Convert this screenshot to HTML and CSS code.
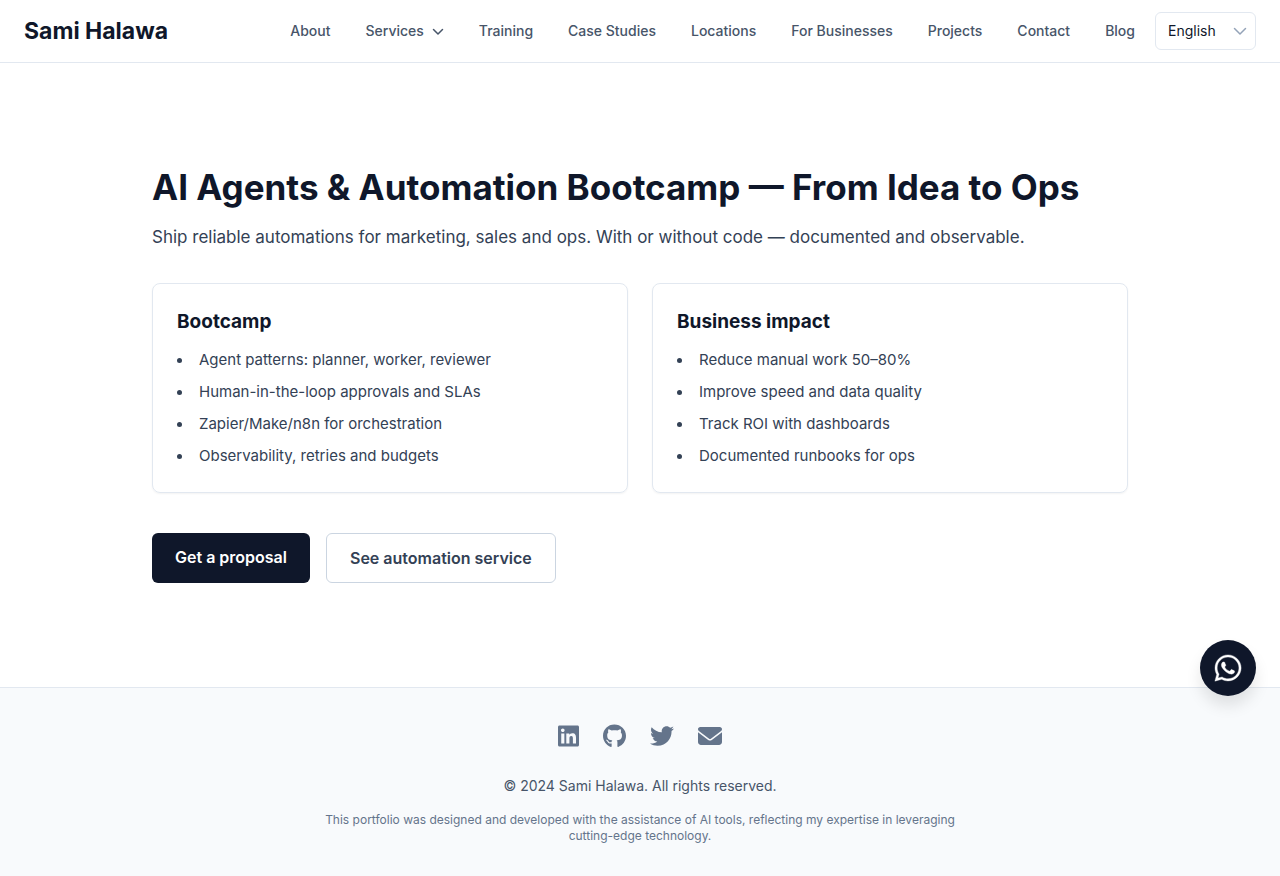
FILE: index.html
```html
<!DOCTYPE html>
<html lang="en">
<head>
<meta charset="utf-8">
<meta name="viewport" content="width=device-width, initial-scale=1">
<title>AI Agents &amp; Automation Bootcamp | Sami Halawa</title>
<link rel="stylesheet" href="styles.css">
</head>
<body>
<header class="header">
  <a class="brand" href="#">Sami Halawa</a>
  <nav class="nav" aria-label="Main">
    <a class="nav-link" href="#">About</a>
    <button class="nav-link" type="button">Services
      <svg class="nav-chevron" viewBox="0 0 12 12" aria-hidden="true"><path d="M1.500 4.500 6 9l4.500-4.500"/></svg>
    </button>
    <a class="nav-link" href="#">Training</a>
    <a class="nav-link" href="#">Case Studies</a>
    <a class="nav-link" href="#">Locations</a>
    <a class="nav-link" href="#">For Businesses</a>
    <a class="nav-link" href="#">Projects</a>
    <a class="nav-link" href="#">Contact</a>
    <a class="nav-link" href="#">Blog</a>
  </nav>
  <div class="language">
    <select class="language-select" aria-label="Language"><option>English</option></select>
    <svg class="language-chevron" viewBox="0 0 20 20" aria-hidden="true"><path d="M4.500 7.500 10 13l5.500-5.500"/></svg>
  </div>
</header>
<main class="main">
  <h1 class="title">AI Agents &amp; Automation Bootcamp — From Idea to Ops</h1>
  <p class="lead">Ship reliable automations for marketing, sales and ops. With or without code — documented and observable.</p>
  <div class="cards">
    <section class="card">
      <h2 class="card-title">Bootcamp</h2>
      <ul class="list">
        <li>Agent patterns: planner, worker, reviewer</li>
        <li>Human-in-the-loop approvals and SLAs</li>
        <li>Zapier/Make/n8n for orchestration</li>
        <li>Observability, retries and budgets</li>
      </ul>
    </section>
    <section class="card">
      <h2 class="card-title">Business impact</h2>
      <ul class="list">
        <li>Reduce manual work 50–80%</li>
        <li>Improve speed and data quality</li>
        <li>Track ROI with dashboards</li>
        <li>Documented runbooks for ops</li>
      </ul>
    </section>
  </div>
  <div class="actions">
    <a class="button button-primary" href="#">Get a proposal</a>
    <a class="button button-outline" href="#">See automation service</a>
  </div>
</main>
<footer class="footer">
  <div class="social">
    <a href="#" aria-label="LinkedIn"><svg class="icon-linkedin" viewBox="0 0 448 512"><path d="M416 32H31.900C14.300 32 0 46.500 0 64.300v383.400C0 465.500 14.300 480 31.900 480H416c17.600 0 32-14.500 32-32.300V64.300c0-17.800-14.400-32.300-32-32.300zM135.400 416H69V202.200h66.500V416zm-33.200-243c-21.300 0-38.500-17.300-38.500-38.500S80.900 96 102.200 96c21.200 0 38.500 17.300 38.500 38.500 0 21.300-17.200 38.500-38.500 38.500zm282.100 243h-66.400V312c0-24.800-.5-56.700-34.500-56.700-34.600 0-39.900 27-39.900 54.900V416h-66.400V202.200h63.700v29.200h.9c8.900-16.800 30.600-34.500 62.900-34.500 67.200 0 79.700 44.300 79.700 101.900V416z"/></svg></a>
    <a href="#" aria-label="GitHub"><svg class="icon-github" viewBox="0 0 496 512"><path d="M165.900 397.400c0 2-2.300 3.600-5.200 3.600-3.300.3-5.600-1.300-5.600-3.600 0-2 2.300-3.600 5.200-3.600 3-.3 5.600 1.300 5.600 3.600zm-31.100-4.500c-.7 2 1.300 4.300 4.300 4.900 2.600 1 5.600 0 6.200-2s-1.300-4.300-4.300-5.200c-2.600-.7-5.500.3-6.200 2.300zm44.200-1.700c-2.900.7-4.900 2.600-4.600 4.900.3 2 2.900 3.300 5.900 2.600 2.900-.7 4.900-2.600 4.600-4.600-.3-1.900-3-3.200-5.900-2.900zM244.800 8C106.100 8 0 113.300 0 252c0 110.900 69.800 205.800 169.500 239.200 12.800 2.300 17.300-5.600 17.300-12.100 0-6.200-.3-40.400-.3-61.400 0 0-70 15-84.700-29.800 0 0-11.400-29.100-27.800-36.600 0 0-22.900-15.700 1.600-15.400 0 0 24.900 2 38.600 25.800 21.900 38.600 58.600 27.500 72.900 20.900 2.300-16 8.800-27.100 16-33.700-55.900-6.200-112.300-14.300-112.300-110.500 0-27.500 7.600-41.300 23.600-58.900-2.600-6.500-11.100-33.300 2.600-67.900 20.900-6.500 69 27 69 27 20-5.600 41.500-8.500 62.800-8.500s42.800 2.900 62.800 8.500c0 0 48.100-33.600 69-27 13.700 34.700 5.200 61.400 2.600 67.900 16 17.700 25.800 31.500 25.800 58.900 0 96.500-58.900 104.200-114.800 110.500 9.200 7.900 17 22.900 17 46.400 0 33.700-.3 75.400-.3 83.600 0 6.500 4.600 14.400 17.300 12.100C428.200 457.800 496 362.900 496 252 496 113.300 383.500 8 244.800 8z"/></svg></a>
    <a href="#" aria-label="Twitter"><svg class="icon-wide" viewBox="0 0 512 512"><path d="M459.370 151.716c.325 4.548.325 9.097.325 13.645 0 138.720-105.583 298.558-298.558 298.558-59.452 0-114.680-17.219-161.137-47.106 8.447.974 16.568 1.299 25.340 1.299 49.055 0 94.213-16.568 130.274-44.832-46.132-.975-84.792-31.188-98.112-72.772 6.498.974 12.995 1.624 19.818 1.624 9.421 0 18.843-1.300 27.614-3.573-48.081-9.747-84.143-51.980-84.143-102.985v-1.299c13.969 7.797 30.214 12.670 47.431 13.319-28.264-18.843-46.781-51.005-46.781-87.391 0-19.492 5.197-37.360 14.294-52.954 51.655 63.675 129.300 105.258 216.365 109.807-1.624-7.797-2.599-15.918-2.599-24.040 0-57.828 46.782-104.934 104.934-104.934 30.213 0 57.502 12.670 76.670 33.137 23.715-4.548 46.456-13.320 66.599-25.340-7.798 24.366-24.366 44.833-46.132 57.827 21.117-2.273 41.584-8.122 60.426-16.243-14.292 20.791-32.161 39.308-52.628 54.253z"/></svg></a>
    <a href="#" aria-label="Email"><svg class="icon-wide" viewBox="0 0 512 512"><path d="M48 64C21.500 64 0 85.500 0 112c0 15.100 7.100 29.300 19.200 38.400l217.600 163.200c11.400 8.500 27 8.500 38.400 0l217.600-163.200c12.100-9.100 19.200-23.300 19.200-38.400 0-26.500-21.500-48-48-48H48zM0 176v208c0 35.300 28.700 64 64 64h384c35.300 0 64-28.700 64-64V176L294.400 339.200c-22.800 17.100-54 17.100-76.800 0L0 176z"/></svg></a>
  </div>
  <p class="copyright">© 2024 Sami Halawa. All rights reserved.</p>
  <p class="note">This portfolio was designed and developed with the assistance of AI tools, reflecting my expertise in leveraging cutting-edge technology.</p>
</footer>
<a class="whatsapp" href="#" aria-label="Chat on WhatsApp"><svg viewBox="0 0 448 512"><path d="M380.900 97.100C339 55.100 283.200 32 223.900 32c-122.400 0-222 99.600-222 222 0 39.100 10.200 77.300 29.600 111L0 480l117.700-30.900c32.400 17.700 68.900 27 106.100 27h.1c122.300 0 224.100-99.600 224.100-222 0-59.300-25.200-115-67.100-157zm-157 341.600c-33.200 0-65.700-8.900-94-25.700l-6.700-4-69.800 18.300L72 359.200l-4.400-7c-18.500-29.400-28.200-63.300-28.200-98.200 0-101.700 82.800-184.500 184.600-184.500 49.300 0 95.600 19.200 130.400 54.100 34.800 34.900 56.200 81.200 56.100 130.500 0 101.800-84.900 184.600-186.600 184.600zm101.200-138.200c-5.500-2.800-32.800-16.200-37.900-18-5.100-1.900-8.800-2.800-12.500 2.800-3.700 5.600-14.300 18-17.600 21.800-3.200 3.700-6.500 4.200-12 1.400-32.600-16.300-54-29.100-75.500-66-5.700-9.800 5.700-9.100 16.300-30.300 1.800-3.700.9-6.900-.5-9.700-1.400-2.800-12.500-30.100-17.100-41.200-4.500-10.800-9.100-9.300-12.500-9.500-3.200-.2-6.900-.2-10.600-.2-3.700 0-9.700 1.400-14.800 6.900-5.100 5.600-19.400 19-19.400 46.300 0 27.300 19.900 53.700 22.600 57.400 2.800 3.700 39.100 59.700 94.800 83.800 35.200 15.200 49 16.500 66.600 13.900 10.700-1.600 32.800-13.400 37.400-26.400 4.600-13 4.600-24.100 3.200-26.400-1.300-2.500-5-3.900-10.500-6.600z"/></svg></a>
</body>
</html>
```

FILE: styles.css
```css
*, *::before, *::after { box-sizing: border-box; }
body { margin: 0; min-height: 100vh; display: flex; flex-direction: column; background: #fff; color: #0f172a; font-family: Inter, "Noto Sans", sans-serif; font-size: 16px; line-height: 24px; }
h1, h2, p, ul { margin: 0; }
a { color: inherit; text-decoration: none; }
svg { display: block; fill: currentColor; }
.header { display: flex; align-items: center; padding: 12px 24px; border-bottom: 1px solid #e2e8f0; }
.brand { margin-right: auto; font-size: 23px; line-height: 32px; font-weight: 700; }
.nav { display: flex; align-items: center; gap: 35px; margin-right: 20px; }
.nav-link { display: flex; align-items: center; gap: 8px; padding: 8px 0; border: 0; background: none; color: #475569; font-family: inherit; font-size: 14px; line-height: 20px; font-weight: 500; white-space: nowrap; }
.nav-chevron { width: 12px; height: 12px; fill: none; stroke: currentColor; stroke-width: 1.5; stroke-linecap: round; stroke-linejoin: round; }
.language { display: grid; align-items: center; }
.language-select { grid-area: 1 / 1; width: 101px; height: 38px; padding: 0 12px; appearance: none; border: 1px solid #e2e8f0; border-radius: 6px; background: #fff; color: #0f172a; font: inherit; font-size: 14px; }
.language-chevron { grid-area: 1 / 1; justify-self: end; width: 20px; height: 20px; margin-right: 6px; fill: none; stroke: #94a3b8; stroke-width: 1.5; stroke-linecap: round; stroke-linejoin: round; pointer-events: none; }
.main { flex: 1; width: 100%; max-width: 1024px; margin: 0 auto; padding: 104px 24px; }
.title { font-size: 35px; line-height: 40px; font-weight: 700; }
.lead { margin-top: 16px; color: #334155; font-size: 17px; line-height: 28px; }
.cards { display: grid; grid-template-columns: 1fr 1fr; gap: 24px; margin-top: 32px; }
.card { padding: 24px; border: 1px solid #e2e8f0; border-radius: 8px; box-shadow: 0 1px 2px rgb(0 0 0 / 5%); }
.card-title { font-size: 19px; line-height: 28px; font-weight: 700; }
.list { display: grid; gap: 8px; margin-top: 12px; padding: 0; list-style: none; color: #334155; font-size: 15px; }
.list li { display: flex; align-items: center; gap: 17px; }
.list li::before { content: ""; flex: none; width: 5px; height: 5px; border-radius: 50%; background: currentColor; }
.actions { display: flex; gap: 16px; margin-top: 40px; }
.button { padding: 12px 23px; border-radius: 6px; font-weight: 600; }
.button-primary { background: #0f172a; color: #fff; }
.button-outline { border: 1px solid #cbd5e1; color: #334155; }
.footer { display: flex; flex-direction: column; align-items: center; padding: 36px 24px 32px; border-top: 1px solid #e2e8f0; background: #f8fafc; text-align: center; }
.social { display: flex; gap: 24px; color: #64748b; }
.social svg { height: 24px; }
.icon-linkedin { width: 21px; }
.icon-github { width: 23px; }
.icon-wide { width: 24px; }
.copyright { margin-top: 28px; color: #475569; font-size: 14px; line-height: 20px; }
.note { max-width: 672px; margin-top: 16px; color: #64748b; font-size: 12px; line-height: 16px; }
.whatsapp { position: fixed; right: 24px; bottom: 180px; display: grid; place-items: center; width: 56px; height: 56px; border-radius: 50%; background: #0f172a; color: #fff; box-shadow: 0 10px 15px rgb(0 0 0 / 10%); }
.whatsapp svg { width: 30px; height: 30px; stroke: currentColor; stroke-width: 6; }
```
